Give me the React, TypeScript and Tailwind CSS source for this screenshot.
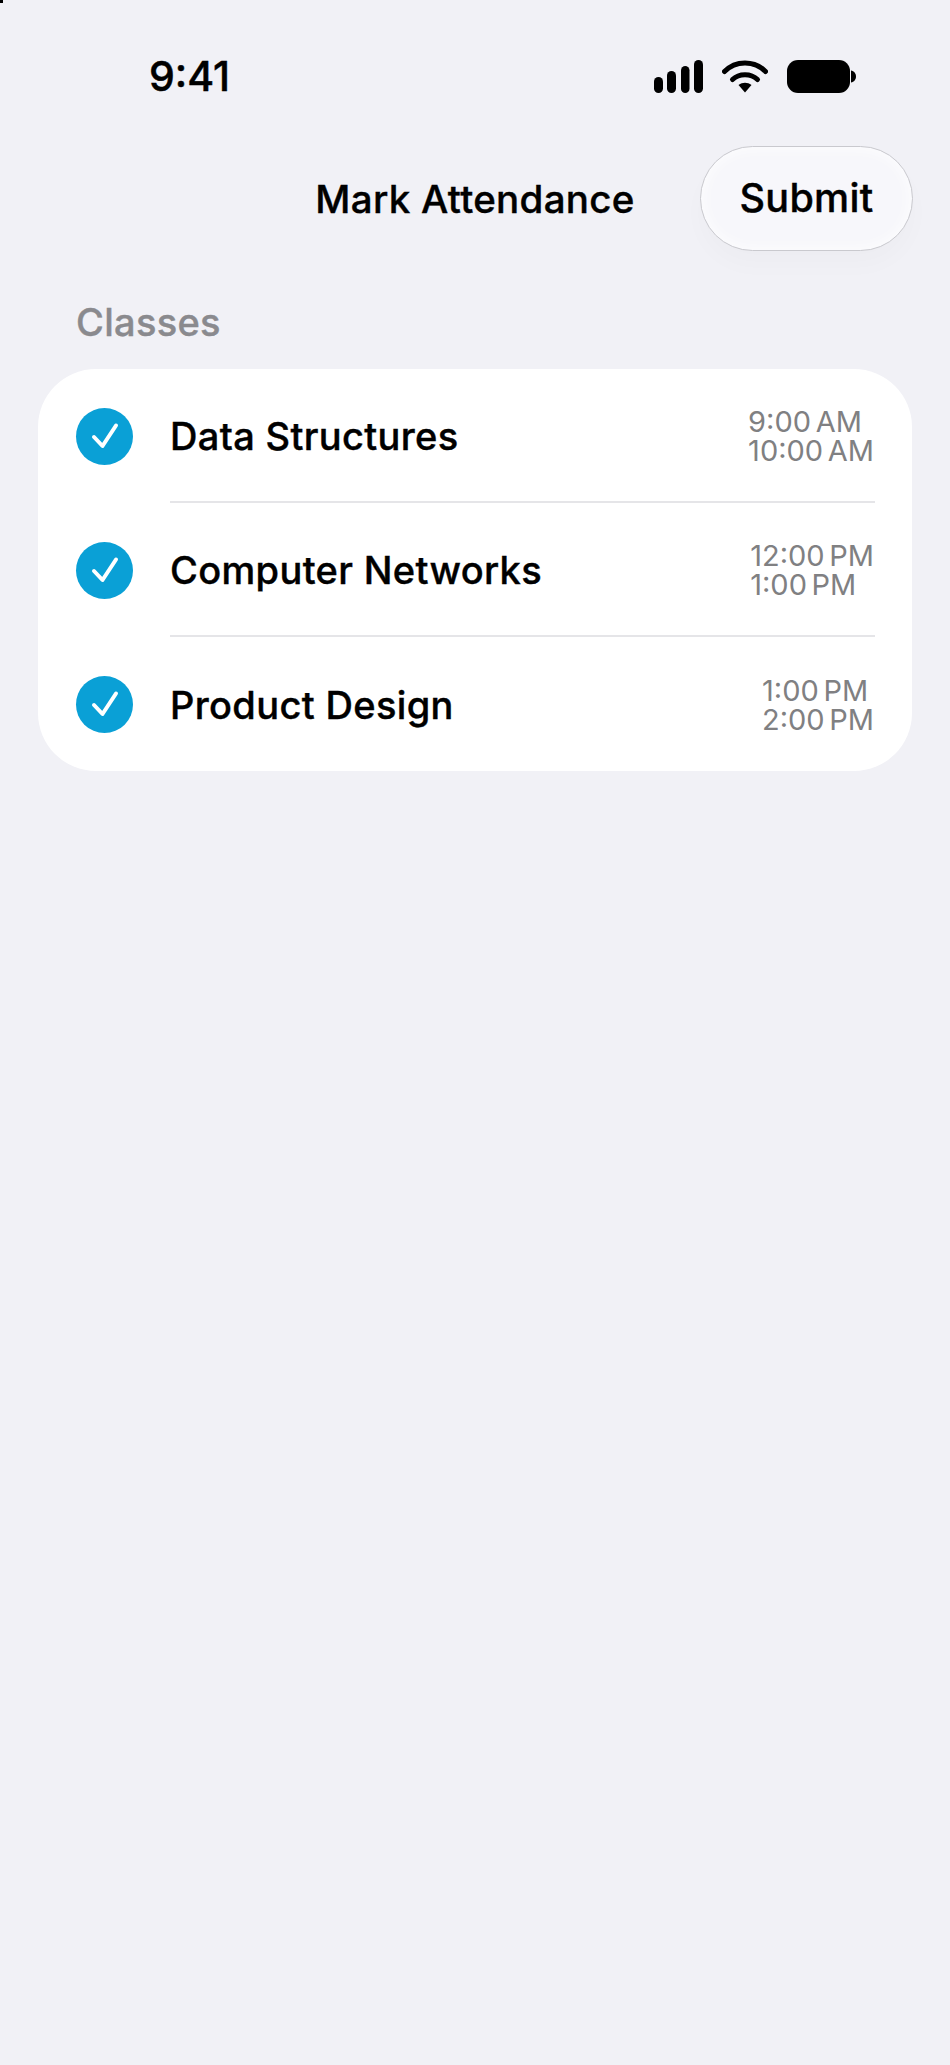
const classes = [
	{ name: "Data Structures", start: "9:00 AM", end: "10:00 AM" },
	{ name: "Computer Networks", start: "12:00 PM", end: "1:00 PM" },
	{ name: "Product Design", start: "1:00 PM", end: "2:00 PM" },
];

function StatusIcons() {
	return (
		<div className="flex items-center gap-[19px]">
			<svg width="49" height="33" viewBox="0 0 49 33" fill="#000">
				<rect x="0" y="17" width="9" height="16" rx="4.5" />
				<rect x="13" y="11" width="9" height="22" rx="4.5" />
				<rect x="27" y="6" width="8.5" height="27" rx="4.25" />
				<rect x="40" y="0" width="9" height="33" rx="4.5" />
			</svg>
			<svg width="46" height="34" viewBox="0 0 46 34" fill="none" stroke="#000" strokeWidth="5">
				<path d="M2.5 12.5C13.5 1 32.5 1 43.5 12.5" strokeLinecap="round" />
				<path d="M10.5 20.5C17 14 29 14 35.5 20.5" strokeLinecap="round" />
				<path d="M16.5 26 L23 33.5 L29.5 26 C25.5 23 20.5 23 16.5 26Z" fill="#000" stroke="none" />
			</svg>
			<svg width="69" height="33" viewBox="0 0 69 33" fill="#000">
				<rect x="0" y="0" width="63" height="33" rx="11" />
				<path d="M64 10.5C67 11 69 13.5 69 16.5C69 19.5 67 22 64 22.5Z" />
			</svg>
		</div>
	);
}

function CheckBadge() {
	return (
		<div className="flex h-[57px] w-[57px] shrink-0 items-center justify-center rounded-full bg-[#0aa0d6]">
			<svg width="28" height="28" viewBox="0 0 28 28" fill="none" stroke="#fff" strokeWidth="4" strokeLinecap="round" strokeLinejoin="round">
				<path d="M3 15L11.5 24L25 3.5" />
			</svg>
		</div>
	);
}

export default function App() {
	return (
		<div className="relative h-[2065px] w-[950px] bg-[#f1f1f6] font-['Inter',sans-serif] text-black">
			<div className="absolute left-0 top-0 h-[3px] w-[3px] bg-black" />
			<div className="flex items-center justify-between pl-[149px] pr-[94px] pt-[53px]">
				<span className="text-[41px] leading-[46px] font-medium [-webkit-text-stroke:0.5px_currentColor]">9:41</span>
				<StatusIcons />
			</div>

			<div className="mt-[47px] grid grid-cols-[1fr_auto_1fr] items-center px-[37px]">
				<div />
				<h1 className="text-[38.5px] leading-[46px] font-medium tracking-[0.3px] [-webkit-text-stroke:0.4px_currentColor]">Mark Attendance</h1>
				<div className="flex justify-end">
					<button className="h-[105px] w-[213px] rounded-full border border-[#c9c9ce] bg-[#f7f7fb] pt-[1px] text-[39.5px] font-medium tracking-[0.3px] [-webkit-text-stroke:0.4px_currentColor] shadow-[inset_0_0_16px_rgba(255,255,255,0.9),0_14px_24px_rgba(0,0,0,0.02)]">
						Submit
					</button>
				</div>
			</div>

			<h2 className="mt-[49px] pl-[76px] text-[38px] leading-[44px] font-medium tracking-[0.3px] text-[#8a8a8e] [-webkit-text-stroke:0.4px_currentColor]">Classes</h2>

			<div className="mx-[38px] mt-[25px] rounded-[58px] bg-white pl-[38px] pr-[37px]">
				{classes.map((item, i) => (
					<div key={item.name} className="flex items-center gap-[37px]">
						<CheckBadge />
						<div className={i < classes.length - 1 ? "flex h-[134px] flex-1 items-center justify-between border-b-2 border-[#e5e5e8]" : "flex h-[134px] flex-1 items-center justify-between"}>
							<span className="pt-[3px] text-[38px] font-medium tracking-[0.35px] [-webkit-text-stroke:0.4px_currentColor]">{item.name}</span>
							<div className="pr-[1px] pt-[1px] text-[29px] leading-[29px] text-[#808082] [word-spacing:-3.5px]">
								<div>{item.start}</div>
								<div>{item.end}</div>
							</div>
						</div>
					</div>
				))}
			</div>
		</div>
	);
}
